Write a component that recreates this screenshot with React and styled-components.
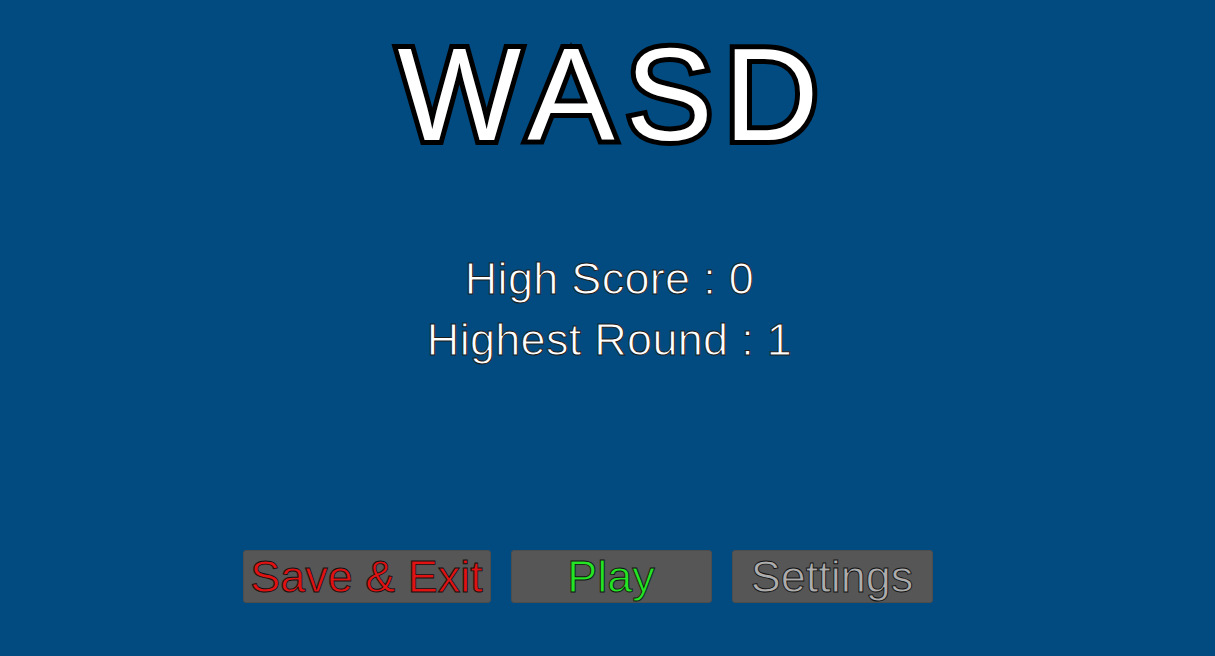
import React from "react";
import styled, { createGlobalStyle } from "styled-components";

const GlobalStyle = createGlobalStyle`
  html, body {
    margin: 0;
    padding: 0;
    height: 100%;
    background: #024b81;
  }
  #root {
    height: 100%;
  }
`;

const Screen = styled.main`
  display: flex;
  flex-direction: column;
  align-items: center;
  height: 100vh;
  background: #024b81;
  font-family: "Liberation Sans", Arial, sans-serif;
  overflow: hidden;
`;

const Title = styled.h1`
  margin: 29px 0 0 12px;
  font-size: 131px;
  line-height: 131px;
  font-weight: 400;
  color: #ffffff;
  -webkit-text-stroke: 10px #000000;
  paint-order: stroke fill;
  letter-spacing: 11px;
`;

const Stats = styled.div`
  display: flex;
  flex-direction: column;
  align-items: center;
  margin-top: 88px;
  margin-left: 4px;
`;

const StatLine = styled.p`
  margin: 0;
  font-size: 45px;
  line-height: 61px;
  color: #ffffff;
  -webkit-text-stroke: 1px #1c1c1c;
  letter-spacing: 0.3px;
`;

const ButtonRow = styled.div`
  display: flex;
  gap: 20px;
  margin-top: auto;
  margin-bottom: 53px;
  margin-right: 40px;
`;

const MenuButton = styled.button`
  display: flex;
  align-items: center;
  justify-content: center;
  width: ${(p) => p.$width}px;
  height: 53px;
  padding: 0;
  background: #565656;
  border: 1px solid #4d4d4d;
  border-radius: 3px;
  font-family: "Liberation Sans", Arial, sans-serif;
  font-size: 45px;
  color: ${(p) => p.$color};
  -webkit-text-stroke: 0.9px #111111;
  cursor: pointer;
`;

const App = () => (
  <>
    <GlobalStyle />
    <Screen>
      <Title>WASD</Title>
      <Stats>
        <StatLine>High Score : 0</StatLine>
        <StatLine>Highest Round : 1</StatLine>
      </Stats>
      <ButtonRow>
        <MenuButton $width={248} $color="#e01212">
          Save &amp; Exit
        </MenuButton>
        <MenuButton $width={201} $color="#24e424">
          Play
        </MenuButton>
        <MenuButton $width={201} $color="#adadad">
          Settings
        </MenuButton>
      </ButtonRow>
    </Screen>
  </>
);

export default App;
